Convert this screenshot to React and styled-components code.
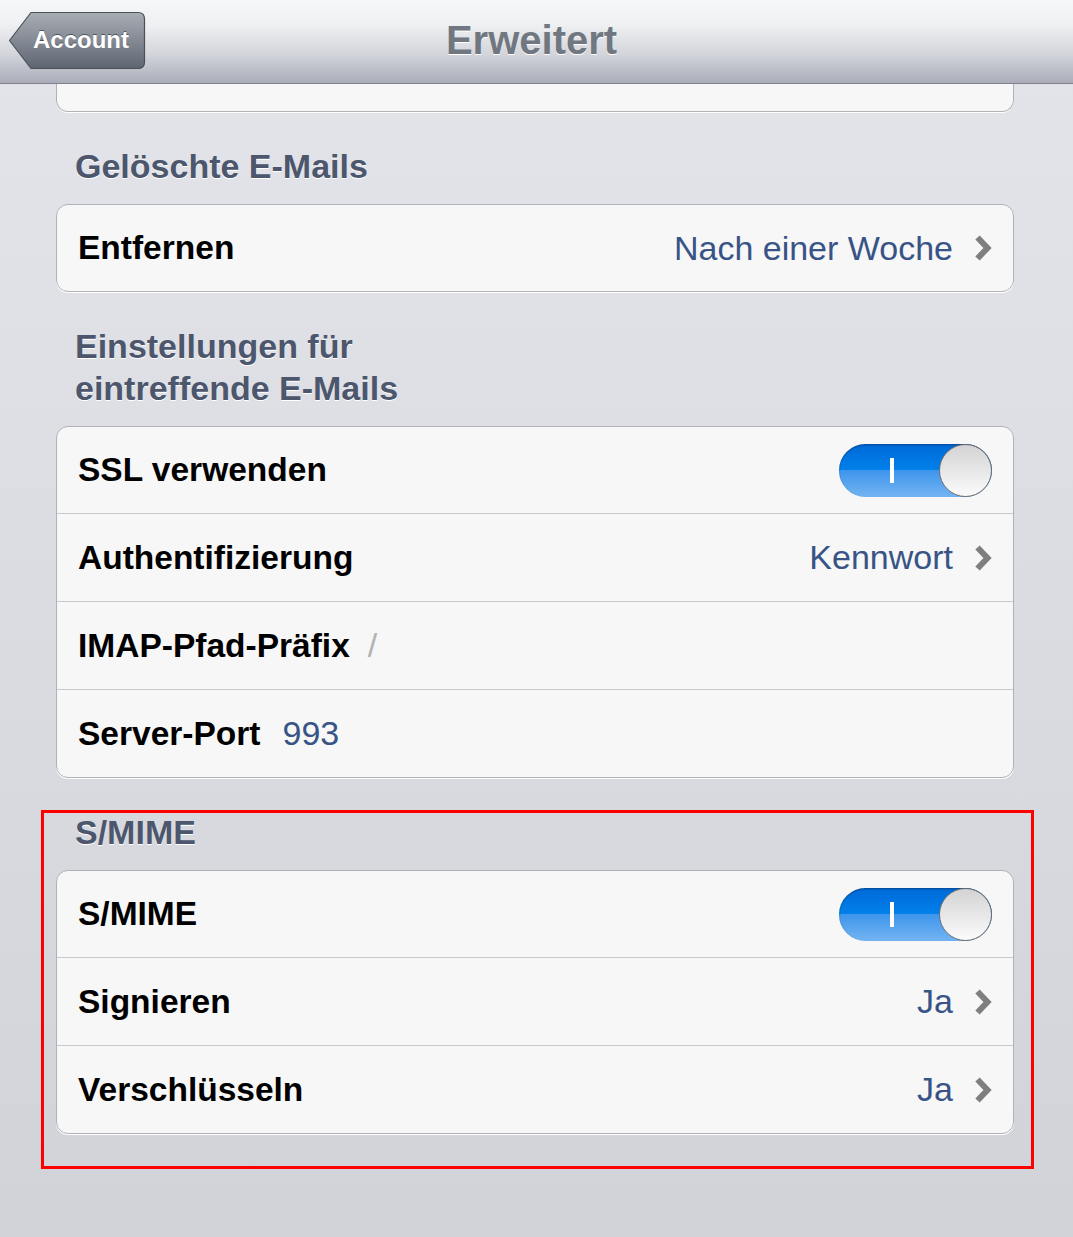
import styled, { createGlobalStyle } from "styled-components";

const GlobalStyle = createGlobalStyle`
    html, body {
        margin: 0;
        padding: 0;
    }
    body {
        width: 1073px;
        min-height: 1237px;
        background: linear-gradient(#e3e5ea, #d2d3d8);
        font-family: "Liberation Sans", Arial, sans-serif;
        overflow: hidden;
    }
`;

function BackShape() {
    return (
        <svg width="138" height="59" viewBox="0 0 138 59">
            <defs>
                <linearGradient id="backGrad" x1="0" y1="0" x2="0" y2="1">
                    <stop offset="0" stopColor="#a9adb4" />
                    <stop offset="0.5" stopColor="#848a94" />
                    <stop offset="1" stopColor="#5e6571" />
                </linearGradient>
            </defs>
            <path
                d="M1.5 29.5 L23 1.5 H130 Q136.5 1.5 136.5 8 V51 Q136.5 57.5 130 57.5 H23 Z"
                fill="url(#backGrad)"
                stroke="#4a4f58"
                strokeWidth="1.2"
                strokeLinejoin="round"
            />
        </svg>
    );
}

function Chevron() {
    return (
        <svg width="18" height="28" viewBox="0 0 18 28">
            <path d="M3.5 3.5 L13.5 14 L3.5 24.5" fill="none" stroke="#7f7f7f" strokeWidth="6" strokeLinecap="butt" strokeLinejoin="miter" />
        </svg>
    );
}

function Toggle() {
    return (
        <ToggleTrack>
            <ToggleBar />
            <ToggleKnob />
        </ToggleTrack>
    );
}

function Row({label, value, detail, chevron, toggle}) {
    return (
        <RowStyle>
            <Label>{label}</Label>
            {detail && <Detail $muted={detail === "/"}>{detail}</Detail>}
            <Spacer />
            {value && <Value>{value}</Value>}
            {chevron && <Chevron />}
            {toggle && <Toggle />}
        </RowStyle>
    );
}

function App() {
    return (
        <>
            <GlobalStyle />
            <NavBar>
                <BackButton>
                    <BackShape />
                    <span>Account</span>
                </BackButton>
                <Title>Erweitert</Title>
            </NavBar>
            <Content>
                <CutCard />
                <Section>
                    <Header>Gelöschte E-Mails</Header>
                    <Card>
                        <Row label="Entfernen" value="Nach einer Woche" chevron />
                    </Card>
                </Section>
                <Section>
                    <Header>Einstellungen für<br />eintreffende E-Mails</Header>
                    <Card>
                        <Row label="SSL verwenden" toggle />
                        <Row label="Authentifizierung" value="Kennwort" chevron />
                        <Row label="IMAP-Pfad-Präfix" detail="/" />
                        <Row label="Server-Port" detail="993" />
                    </Card>
                </Section>
                <Marked>
                    <Header $tight>S/MIME</Header>
                    <Card>
                        <Row label="S/MIME" toggle />
                        <Row label="Signieren" value="Ja" chevron />
                        <Row label="Verschlüsseln" value="Ja" chevron />
                    </Card>
                </Marked>
            </Content>
        </>
    );
}

const NavBar = styled.div`
    position: relative;
    display: flex;
    align-items: center;
    justify-content: center;
    height: 83px;
    border-bottom: 1px solid #80838f;
    background: linear-gradient(#f6f7f8 0%, #eef0f2 30%, #d3d5db 65%, #aaadb9 100%);
`;
const BackButton = styled.div`
    position: absolute;
    left: 8px;
    top: 11px;
    width: 138px;
    height: 59px;

    svg {
        position: absolute;
        left: 0;
        top: 0;
    }
    span {
        position: relative;
        display: block;
        padding: 15px 0 0 25px;
        font-size: 24px;
        font-weight: bold;
        color: #fff;
        text-shadow: 0 -1px 0 rgba(0, 0, 0, 0.45);
    }
`;
const Title = styled.div`
    font-size: 40px;
    font-weight: bold;
    color: #707780;
    text-shadow: 0 1px 0 #fff;
    margin-top: -3px;
    margin-right: 10px;
`;
const Content = styled.div`
    padding: 0 59px 0 56px;
`;
const CutCard = styled.div`
    height: 27px;
    background: #f7f7f7;
    border: 1px solid #b0b2b7;
    border-top: none;
    border-radius: 0 0 12px 12px;
    box-shadow: 0 1px 0 #fff;
`;
const Section = styled.div`
    padding-top: 33px;
`;
const Header = styled.div`
    padding: 0 19px;
    margin-bottom: ${p => (p.$tight ? "19px" : "17px")};
    font-size: 34px;
    line-height: ${p => (p.$tight ? "38px" : "42px")};
    font-weight: bold;
    color: #4c566c;
    text-shadow: 0 1px 0 #fff;
`;
const Card = styled.div`
    background: #f7f7f7;
    border: 1px solid #b0b2b7;
    border-radius: 12px;
    box-shadow: 0 1px 0 #fff;
    overflow: hidden;
`;
const RowStyle = styled.div`
    display: flex;
    align-items: center;
    height: 87px;
    padding: 0 21px 0 21px;
    border-top: 1px solid #c9c9cc;

    &:first-child {
        height: 86px;
        border-top: none;
    }
`;
const Label = styled.span`
    font-size: 33.5px;
    font-weight: bold;
    color: #000;
`;
const Detail = styled.span`
    margin-left: ${p => (p.$muted ? "18px" : "22px")};
    font-size: 34px;
    color: ${p => (p.$muted ? "#b3b3b3" : "#385487")};
`;
const Spacer = styled.div`
    flex: 1;
`;
const Value = styled.span`
    margin-right: 21px;
    font-size: 34px;
    color: #385487;
`;
const ToggleTrack = styled.div`
    position: relative;
    width: 153px;
    height: 53px;
    border-radius: 27px;
    background: linear-gradient(#0069d8 0%, #0080ea 48%, #3e95ec 50%, #74b4f2 100%);
    box-shadow: inset 0 1px 2px rgba(0, 0, 0, 0.35);
`;
const ToggleBar = styled.div`
    position: absolute;
    left: 51px;
    top: 14px;
    width: 4px;
    height: 25px;
    background: #fff;
`;
const ToggleKnob = styled.div`
    position: absolute;
    right: 0;
    top: 0;
    width: 51px;
    height: 51px;
    border-radius: 50%;
    border: 1px solid #6f6f6f;
    background: linear-gradient(#d3d3d3, #fbfbfb);
`;
const Marked = styled.div`
    margin: 32px 0 0 -15px;
    padding: 0 17px 32px 12px;
    border: 3px solid #ff0000;
    width: 958px;
`;

export default App;
